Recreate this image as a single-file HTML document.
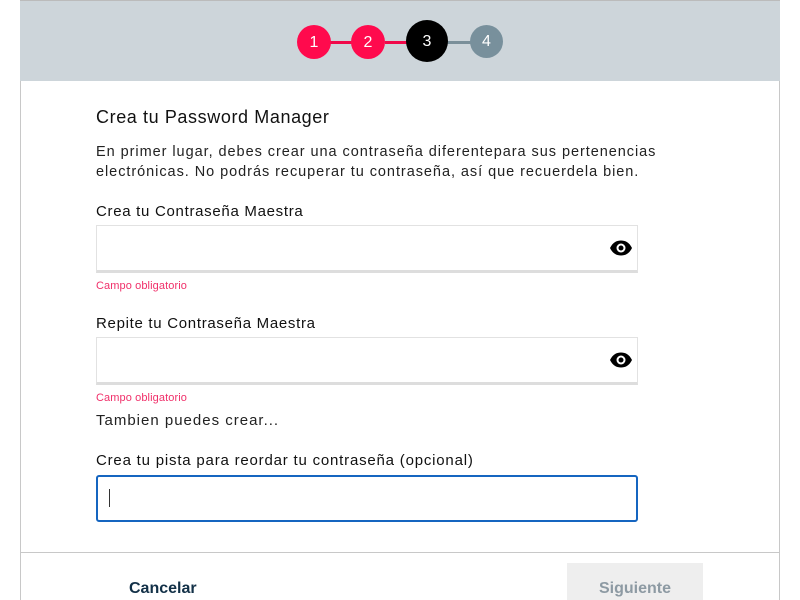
<!DOCTYPE html>
<html><head><meta charset="utf-8"><style>
*{box-sizing:border-box;margin:0;padding:0}
body{width:800px;height:600px;overflow:hidden;background:#fff;font-family:"Liberation Sans",sans-serif;color:#111;position:relative}
.frame{position:absolute;left:20px;top:0;width:760px;height:600px;border-left:1px solid #c8c8c8;border-right:1px solid #c8c8c8}
.head{position:absolute;left:20px;top:0;width:760px;height:81px;background:#cdd5da;border-top:1px solid #bbb}
.c{position:absolute;border-radius:50%;color:#fff;text-align:center;font-size:16px}
.ln{position:absolute;height:3px;top:41px}
.t{position:absolute;left:96px;white-space:nowrap}
.inp{position:absolute;left:96px;width:542px;height:48px;border:1px solid #e2e2e2;border-bottom:3px solid #ddd;background:#fff}
.err{position:absolute;left:96px;font-size:11px;color:#f0306a;letter-spacing:0.1px}
.eye{position:absolute;right:4px;top:13px}
</style></head><body>
<div class="frame"></div>
<div class="head"></div>
<div class="ln" style="left:330px;width:40px;background:#f0094a"></div>
<div class="ln" style="left:385px;width:30px;background:#f0094a"></div>
<div class="ln" style="left:445px;width:30px;background:#7a8f99"></div>
<div class="c" style="left:297px;top:25px;width:34px;height:34px;line-height:35px;background:#ff0a4d">1</div>
<div class="c" style="left:351px;top:25px;width:34px;height:34px;line-height:35px;background:#ff0a4d">2</div>
<div class="c" style="left:406px;top:20px;width:42px;height:42px;line-height:43px;background:#000">3</div>
<div class="c" style="left:470px;top:25px;width:33px;height:33px;line-height:34px;background:#78909c">4</div>
<div class="t" style="top:107px;font-size:18px;letter-spacing:0.6px">Crea tu Password Manager</div>
<div class="t" style="top:142px;font-size:14.5px;line-height:20px;color:#222;letter-spacing:0.95px">En primer lugar, debes crear una contraseña diferentepara sus pertenencias<br>electrónicas. No podrás recuperar tu contraseña, así que recuerdela bien.</div>
<div class="t" style="top:203px;font-size:15px;letter-spacing:0.7px">Crea tu Contraseña Maestra</div>
<div class="inp" style="top:225px"><svg class="eye" width="24" height="18" viewBox="0 0 24 18"><path d="M1 9C4 3 8 1.5 12 1.5S20 3 23 9C20 15 16 16.5 12 16.5S4 15 1 9Z" fill="#000"/><circle cx="12" cy="9" r="4.5" fill="#fff"/><circle cx="12" cy="9" r="2.5" fill="#000"/></svg></div>
<div class="err" style="top:280px">Campo obligatorio</div>
<div class="t" style="top:315px;font-size:15px;letter-spacing:0.7px">Repite tu Contraseña Maestra</div>
<div class="inp" style="top:337px"><svg class="eye" width="24" height="18" viewBox="0 0 24 18"><path d="M1 9C4 3 8 1.5 12 1.5S20 3 23 9C20 15 16 16.5 12 16.5S4 15 1 9Z" fill="#000"/><circle cx="12" cy="9" r="4.5" fill="#fff"/><circle cx="12" cy="9" r="2.5" fill="#000"/></svg></div>
<div class="err" style="top:392px">Campo obligatorio</div>
<div class="t" style="top:412px;font-size:15px;color:#222;letter-spacing:1px">Tambien puedes crear...</div>
<div class="t" style="top:452px;font-size:15px;letter-spacing:0.8px">Crea tu pista para reordar tu contraseña (opcional)</div>
<div style="position:absolute;left:96px;top:475px;width:542px;height:47px;border:2px solid #1565c0;border-radius:3px"><div style="position:absolute;left:11px;top:12px;width:1px;height:18px;background:#333"></div></div>
<div style="position:absolute;left:20px;top:552px;width:760px;height:1px;background:#c8c8c8"></div>
<div style="position:absolute;left:129px;top:580px;font-size:16px;font-weight:bold;color:#123047">Cancelar</div>
<div style="position:absolute;left:567px;top:563px;width:136px;height:37px;background:#eee;color:#8d9aa3;font-weight:bold;font-size:16px;text-align:center;padding-top:17px">Siguiente</div>
</body></html>
